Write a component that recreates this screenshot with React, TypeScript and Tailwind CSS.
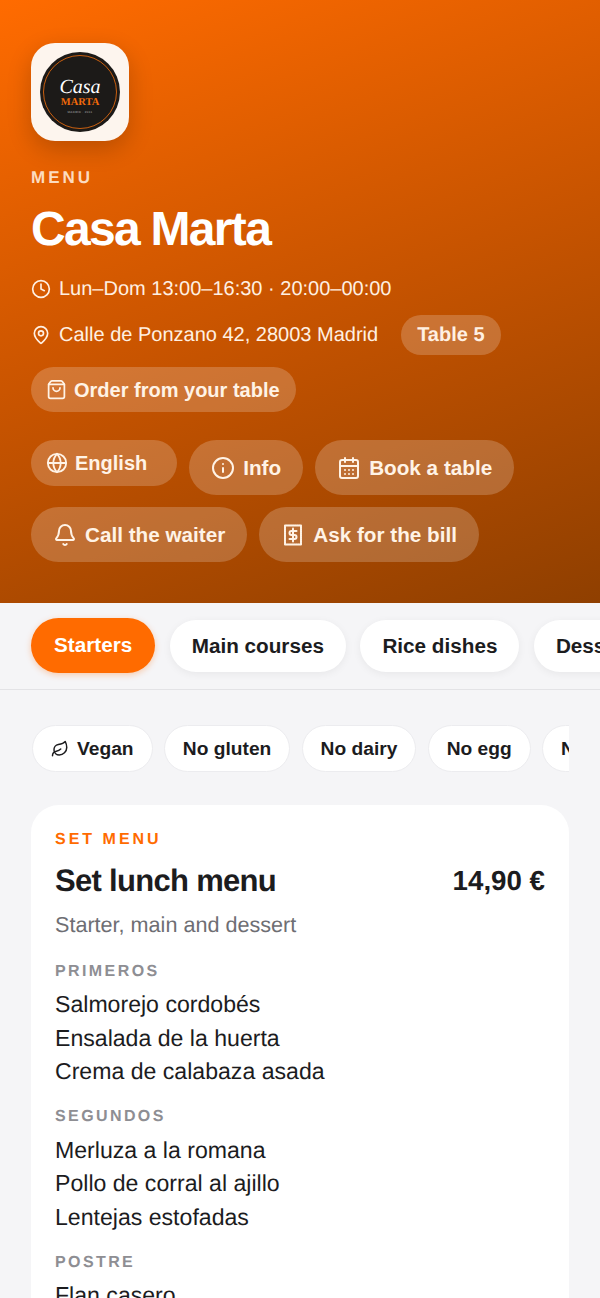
import { Bell, CalendarDays, Clock, Globe, Info, Leaf, MapPin, ShoppingBag } from "lucide-react";
import type { LucideIcon } from "lucide-react";

const tabs = ["Main courses", "Rice dishes", "Desserts"];
const filters = ["No gluten", "No dairy", "No egg", "No nuts"];

const courses = [
  { title: "PRIMEROS", items: ["Salmorejo cordobés", "Ensalada de la huerta", "Crema de calabaza asada"] },
  { title: "SEGUNDOS", items: ["Merluza a la romana", "Pollo de corral al ajillo", "Lentejas estofadas"] },
  { title: "POSTRE", items: ["Flan casero", "Fruta del tiempo"] },
];

const BillIcon = ({ className }: { className?: string }) => (
  <svg viewBox="0 0 24 24" fill="none" stroke="currentColor" strokeWidth="2" strokeLinecap="round" strokeLinejoin="round" className={className}>
    <path d="M4 2.5h16v19H4z" strokeDasharray="1.6 0.5" />
    <path d="M15.5 8h-5a2 2 0 0 0 0 4h3a2 2 0 0 1 0 4h-5" />
    <path d="M12 5.5v13" />
  </svg>
);

const ActionButton = ({ icon: Icon, label }: { icon: LucideIcon | typeof BillIcon; label: string }) => (
  <button className="flex h-[55px] items-center gap-2 rounded-full bg-white/20 px-[22px] text-[20.7px] font-bold text-[#fff3e6]">
    <Icon className="size-6" />
    {label}
  </button>
);

export default function App() {
  return (
    <div className="min-h-[1298px] overflow-hidden bg-[#f5f5f7] font-['Liberation_Sans',Arial,sans-serif] text-[#1c1c1e] [text-rendering:geometricPrecision]">
      <header className="h-[603px] bg-[linear-gradient(160deg,#ff6b00_0%,#c85400_50%,#8f3f00_100%)] px-[31px] pt-[43px] text-white">
        <div className="flex size-[98px] items-center justify-center rounded-[24px] bg-[#fdf5ee] shadow-[0_8px_24px_rgba(0,0,0,0.2)]">
          <div className="flex size-[80px] items-center justify-center rounded-full bg-[#1c1a18]">
            <div className="flex size-[74px] flex-col items-center justify-center rounded-full border border-[#c85f10] pt-[8px]">
              <span className="font-['Liberation_Serif',serif] text-[20px] leading-[19px] text-white italic">Casa</span>
              <span className="font-['Liberation_Serif',serif] text-[10.5px] leading-[11px] font-bold text-[#f26a0a]">MARTA</span>
              <span className="mt-[2px] text-[3px] leading-[4px] tracking-[0.3px] text-[#aaa]">MADRID · 2011</span>
            </div>
          </div>
        </div>
        <p className="mt-[27px] text-[17px] leading-[20px] font-bold tracking-[3px] text-[#fcdcc0]">MENU</p>
        <h1 className="mt-[14px] text-[48px] leading-[56px] font-bold tracking-[-1.7px]">Casa Marta</h1>
        <div className="mt-[18px] flex items-center gap-2 text-[20px] leading-[26px] text-[#fff0e2]">
          <Clock className="size-5" />
          Lun–Dom 13:00–16:30 · 20:00–00:00
        </div>
        <div className="mt-[13px] flex h-[40px] items-center text-[20px] text-[#fff0e2]">
          <MapPin className="mr-2 size-5" />
          Calle de Ponzano 42, 28003 Madrid
          <span className="ml-[23px] rounded-full bg-white/20 px-[16px] py-[8px] text-[20px] leading-[24px] font-bold">Table 5</span>
        </div>
        <button className="mt-[12px] flex h-[45px] items-center gap-[7px] rounded-full bg-white/20 pr-[16px] pl-[15px] text-[20px] font-bold text-[#fff3e6]">
          <ShoppingBag className="size-[21px]" />
          Order from your table
        </button>
        <div className="mt-[28px] flex flex-wrap items-start gap-[12px]">
          <button className="flex h-[46px] items-center gap-[7px] rounded-full bg-white/20 pr-[30px] pl-[15px] text-[20px] font-bold text-[#fff3e6]">
            <Globe className="size-[22px]" />
            English
          </button>
          <ActionButton icon={Info} label="Info" />
          <ActionButton icon={CalendarDays} label="Book a table" />
          <ActionButton icon={Bell} label="Call the waiter" />
          <ActionButton icon={BillIcon} label="Ask for the bill" />
        </div>
      </header>

      <nav className="flex h-[87px] items-start gap-[14.5px] overflow-hidden border-b border-[#e3e3e6] pt-[15px] pl-[31px]">
        <button className="h-[55px] shrink-0 rounded-full bg-[#ff6b00] px-[23px] pb-px text-[20.7px] font-bold text-white shadow-[0_2px_6px_rgba(255,107,0,0.3)]">Starters</button>
        {tabs.map((t) => (
          <button key={t} className="mt-[2px] h-[52px] shrink-0 rounded-full bg-white px-[22px] pb-px text-[20.7px] font-bold shadow-[0_2px_8px_rgba(0,0,0,0.06)]">{t}</button>
        ))}
      </nav>

      <div className="mx-[31px] mt-[34px] flex gap-[11.3px] overflow-hidden py-px">
        <button className="ml-px flex h-[47px] shrink-0 items-center gap-[8px] rounded-full border border-[#ececef] bg-white px-[18px] pt-[1px] text-[19.2px] font-bold">
          <Leaf className="size-[18px]" />
          Vegan
        </button>
        {filters.map((f) => (
          <button key={f} className="h-[47px] shrink-0 rounded-full border border-[#ececef] bg-white px-[18px] pt-[1px] text-[19.2px] font-bold">{f}</button>
        ))}
      </div>

      <section className="mx-[31px] mt-[32px] rounded-[28px] bg-white px-[24px] pt-[25px] pb-[24px]">
        <p className="text-[16px] leading-[20px] font-bold tracking-[3px] text-[#ff6b00]">SET MENU</p>
        <div className="mt-[10px] flex items-center justify-between">
          <h2 className="text-[31px] leading-[40px] font-bold tracking-[-0.7px]">Set lunch menu</h2>
          <span className="text-[27.7px] font-bold">14,90 €</span>
        </div>
        <p className="mt-[7px] pb-[2.5px] text-[21.6px] leading-[32px] text-[#6e6e73]">Starter, main and dessert</p>
        {courses.map((c) => (
          <div key={c.title} className="mt-[18.5px]">
            <p className="text-[16px] leading-[20px] font-bold tracking-[2.4px] text-[#8e8e93]">{c.title}</p>
            <ul className="mt-[6.5px] text-[23.1px] leading-[33.5px]">
              {c.items.map((i) => <li key={i}>{i}</li>)}
            </ul>
          </div>
        ))}
      </section>
    </div>
  );
}
